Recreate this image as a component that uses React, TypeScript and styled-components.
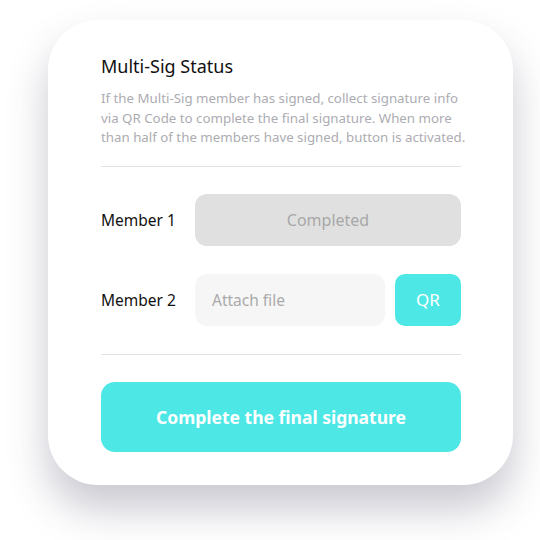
import React from "react";
import styled, { createGlobalStyle } from "styled-components";

const GlobalStyle = createGlobalStyle`
  body {
    margin: 0;
    background: #ffffff;
    font-family: "Noto Sans", "Liberation Sans", sans-serif;
  }
`;

export default function App() {
  return (
    <>
      <GlobalStyle />
      <Page>
        <Card>
          <Title>Multi-Sig Status</Title>
          <Description>
            If the Multi-Sig member has signed, collect signature info
            <br />
            via QR Code to complete the final signature. When more
            <br />
            than half of the members have signed, button is activated.
          </Description>
          <Divider $gap={18} />
          <MemberList>
            <MemberRow>
              <MemberLabel>Member 1</MemberLabel>
              <StatusBox>Completed</StatusBox>
            </MemberRow>
            <MemberRow>
              <MemberLabel>Member 2</MemberLabel>
              <FileInput>Attach file</FileInput>
              <QrButton>QR</QrButton>
            </MemberRow>
          </MemberList>
          <Divider $gap={28} />
          <SubmitButton>Complete the final signature</SubmitButton>
        </Card>
      </Page>
    </>
  );
}

const Page = styled.div`
  width: 540px;
  height: 540px;
  padding: 20px 0 0 48px;
  box-sizing: border-box;
  overflow: hidden;
`;

const Card = styled.div`
  width: 465px;
  height: 465px;
  box-sizing: border-box;
  padding: 34px 52px 0 53px;
  background: #ffffff;
  border-radius: 50px;
  box-shadow: 0 24px 40px rgba(60, 60, 90, 0.28);
  display: flex;
  flex-direction: column;
`;

const Title = styled.div`
  font-size: 18px;
  color: #111111;
  line-height: 24px;
`;

const Description = styled.div`
  margin-top: 11px;
  font-size: 13.3px;
  line-height: 19.5px;
  color: #acacb2;
  white-space: nowrap;
`;

const Divider = styled.div<{ $gap: number }>`
  height: 1px;
  background: #e2e2e4;
  margin-top: ${(p) => p.$gap}px;
`;

const MemberList = styled.div`
  display: flex;
  flex-direction: column;
  gap: 28px;
  margin-top: 27px;
`;

const MemberRow = styled.div`
  display: flex;
  align-items: center;
  gap: 10px;
  height: 52px;
`;

const MemberLabel = styled.div`
  width: 84px;
  font-size: 15.5px;
  color: #111111;
`;

const StatusBox = styled.div`
  flex: 1;
  height: 52px;
  border-radius: 12px;
  background: #e0e0e0;
  color: #a8a8a8;
  font-size: 16px;
  display: flex;
  align-items: center;
  justify-content: center;
`;

const FileInput = styled.div`
  flex: 1;
  height: 52px;
  border-radius: 12px;
  background: #f6f6f6;
  color: #aaaaaa;
  font-size: 15.5px;
  display: flex;
  align-items: center;
  padding-left: 17px;
`;

const QrButton = styled.div`
  width: 66px;
  height: 52px;
  border-radius: 10px;
  background: #4de8e6;
  color: #ffffff;
  font-size: 17px;
  display: flex;
  align-items: center;
  justify-content: center;
`;

const SubmitButton = styled.div`
  margin-top: 27px;
  height: 70px;
  border-radius: 14px;
  background: #4de8e6;
  color: #ffffff;
  font-size: 17.5px;
  font-weight: 700;
  display: flex;
  align-items: center;
  justify-content: center;
`;
